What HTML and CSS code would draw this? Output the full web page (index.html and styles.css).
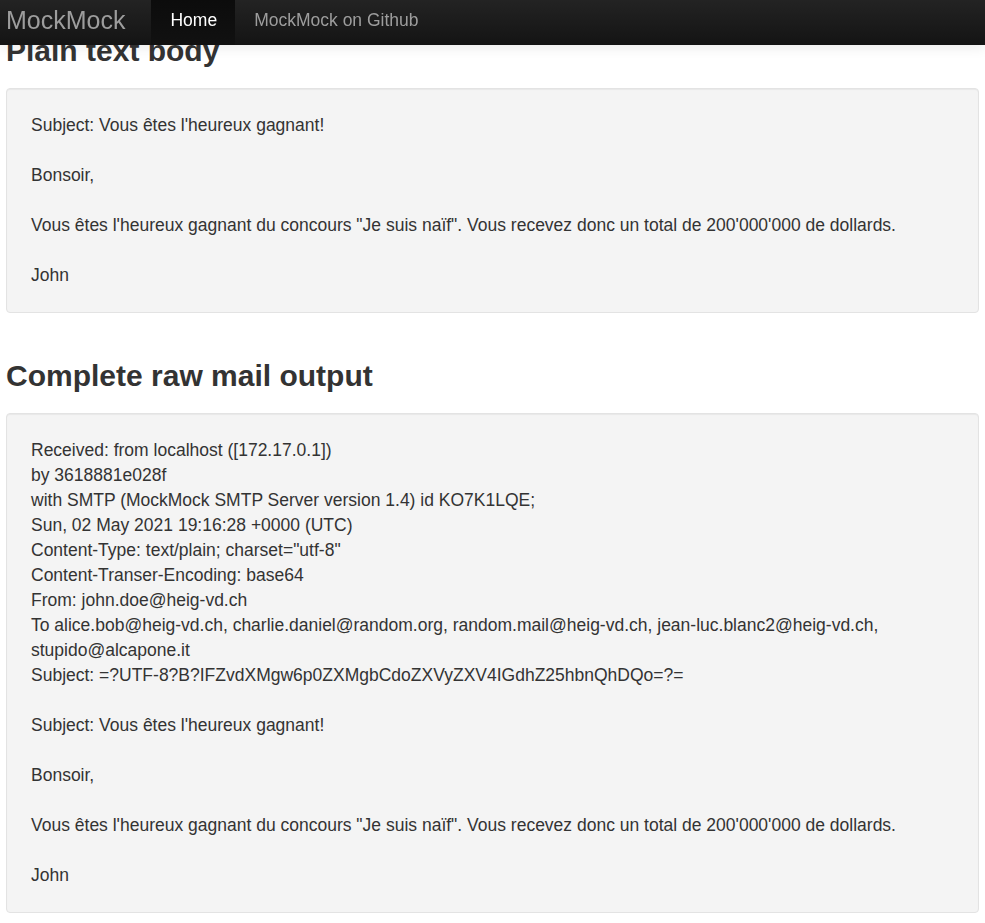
FILE: index.html
```html
<!DOCTYPE html>
<html>
<head>
<meta charset="utf-8">
<title>MockMock</title>
<link rel="stylesheet" href="styles.css">
</head>
<body>
<nav class="navbar">
  <a class="brand" href="#">MockMock</a>
  <ul class="nav">
    <li class="active"><a href="#">Home</a></li>
    <li><a href="#">MockMock on Github</a></li>
  </ul>
</nav>
<main class="container">
  <h2 class="heading first">Plain text body</h2>
  <div class="well">Subject: Vous êtes l'heureux gagnant!

Bonsoir,

Vous êtes l'heureux gagnant du concours "Je suis naïf". Vous recevez donc un total de 200'000'000 de dollards.

John</div>
  <h2 class="heading">Complete raw mail output</h2>
  <div class="well">Received: from localhost ([172.17.0.1])
by 3618881e028f
with SMTP (MockMock SMTP Server version 1.4) id KO7K1LQE;
Sun, 02 May 2021 19:16:28 +0000 (UTC)
Content-Type: text/plain; charset="utf-8"
Content-Transer-Encoding: base64
From: john.doe@heig-vd.ch
To alice.bob@heig-vd.ch, charlie.daniel@random.org, random.mail@heig-vd.ch, jean-luc.blanc2@heig-vd.ch, stupido@alcapone.it
Subject: =?UTF-8?B?IFZvdXMgw6p0ZXMgbCdoZXVyZXV4IGdhZ25hbnQhDQo=?=

Subject: Vous êtes l'heureux gagnant!

Bonsoir,

Vous êtes l'heureux gagnant du concours "Je suis naïf". Vous recevez donc un total de 200'000'000 de dollards.

John</div>
</main>
</body>
</html>
```

FILE: styles.css
```css
html, body {
  margin: 0;
  padding: 0;
  background: #fff;
}
body {
  font-family: "Liberation Sans", Arial, Helvetica, sans-serif;
  font-size: 17.5px;
  line-height: 25px;
  color: #333;
  overflow: hidden;
}
.navbar {
  position: fixed;
  top: 0;
  left: 0;
  right: 0;
  height: 45px;
  z-index: 10;
  display: flex;
  align-items: stretch;
  background: linear-gradient(to bottom, #232323 0%, #141414 100%);
  box-shadow: 0 3px 12px rgba(0, 0, 0, 0.08);
}
.brand {
  display: flex;
  align-items: center;
  padding: 0 26px 4px 6px;
  font-size: 25px;
  color: #9d9d9d;
  text-decoration: none;
}
.nav {
  list-style: none;
  margin: 0;
  padding: 0;
  display: flex;
}
.nav li {
  display: flex;
}
.nav a {
  display: flex;
  align-items: center;
  padding: 0 18px 4px 19px;
  font-size: 17.5px;
  color: #9d9d9d;
  text-decoration: none;
}
.nav .active a {
  color: #fff;
  background: linear-gradient(to bottom, #0c0c0c 0%, #111 100%);
}
.container {
  padding: 34px 6px 0;
}
.heading {
  margin: 46px 0 21px;
  font-size: 30px;
  line-height: 33px;
  font-weight: bold;
  color: #333;
}
.heading.first {
  margin-top: 0;
}
.well {
  background: #f4f4f4;
  border: 1px solid #e3e3e3;
  border-radius: 4px;
  box-shadow: inset 0 1px 1px rgba(0, 0, 0, 0.05);
  padding: 24px 24px 24px;
  white-space: pre-line;
}
```
